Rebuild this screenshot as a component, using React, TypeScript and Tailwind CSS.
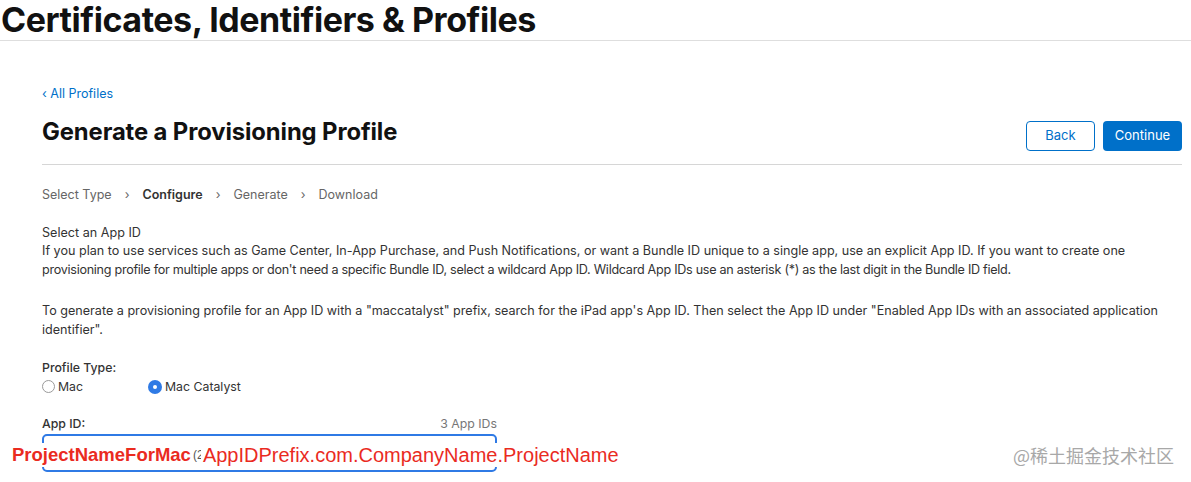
import React from "react";

const sans = { fontFamily: "Inter, 'Noto Sans', sans-serif" };

export default function App() {
  return (
    <div className="relative w-[1191px] h-[482px] bg-white overflow-hidden" style={sans}>
      <header className="h-[41px] border-b border-[#dedede] pl-[1px]">
        <h1 className="text-[34px] leading-[40px] font-bold text-[#111] tracking-[-0.45px]">
          Certificates, Identifiers &amp; Profiles
        </h1>
      </header>

      <main className="ml-[42px] w-[1140px]">
        <a className="block mt-[45px] text-[12.5px] leading-[16px] text-[#0070c9]">‹ All Profiles</a>

        <div className="flex items-end justify-between mt-[16px] pb-[18px] border-b border-[#d6d6d6]">
          <h2 className="text-[23.8px] leading-[28px] font-bold text-[#111] tracking-[-0.1px]">
            Generate a Provisioning Profile
          </h2>
          <div className="flex gap-[8px] mb-[-5px]">
            <button className="w-[69px] h-[30px] rounded-[4px] border border-[#0070c9] text-[#0070c9] text-[13px] bg-white">
              Back
            </button>
            <button className="w-[79px] h-[30px] rounded-[4px] bg-[#0070c9] text-white text-[13px]">
              Continue
            </button>
          </div>
        </div>

        <nav className="flex items-center mt-[22px] text-[12.5px] leading-[16px] text-[#666]">
          <span>Select Type</span>
          <span className="mx-[13px]">›</span>
          <span className="font-semibold text-[#333]">Configure</span>
          <span className="mx-[13px]">›</span>
          <span>Generate</span>
          <span className="mx-[13px]">›</span>
          <span>Download</span>
        </nav>

        <section className="mt-[21px] text-[12.6px] text-[#333]">
          <p className="leading-[17px]">Select an App ID</p>
          <p className="leading-[19px]">
            If you plan to use services such as Game Center, In-App Purchase, and Push Notifications, or want a Bundle ID unique to a single app, use an explicit App ID. If you want to create one
            <br />
            <span className="tracking-[-0.28px]">
              provisioning profile for multiple apps or don't need a specific Bundle ID, select a wildcard App ID. Wildcard App IDs use an asterisk (*) as the last digit in the Bundle ID field.
            </span>
          </p>
          <p className="mt-[22px] leading-[19px]">
            To generate a provisioning profile for an App ID with a "maccatalyst" prefix, search for the iPad app's App ID. Then select the App ID under "Enabled App IDs with an associated application
            <br />
            identifier".
          </p>
        </section>

        <div className="mt-[19px] text-[12.3px] leading-[19px] text-[#333]">
          <div className="font-medium">Profile Type:</div>
          <div className="flex items-center">
            <label className="flex items-center w-[106px]">
              <span className="w-[13px] h-[13px] rounded-full border border-[#9a9a9a] bg-white mr-[3px]" />
              <span>Mac</span>
            </label>
            <label className="flex items-center">
              <span className="w-[14px] h-[14px] rounded-full bg-[#2f7ae5] mr-[3px] flex items-center justify-center">
                <span className="w-[4px] h-[4px] rounded-full bg-white" />
              </span>
              <span>Mac Catalyst</span>
            </label>
          </div>
        </div>

        <div className="mt-[18px] w-[455px] text-[12.3px] leading-[19px]">
          <div className="flex justify-between items-end">
            <span className="font-medium text-[#333]">App ID:</span>
            <span className="text-[#777]">3 App IDs</span>
          </div>
          <div className="h-[38px] rounded-[5px] border-2 border-[#2f7ae5] mt-[1px]" />
        </div>
      </main>

      <div
        className="absolute left-[12px] top-[443px] flex items-center leading-[24px] text-[#ea2b1f]"
        style={{ fontFamily: "'Liberation Sans', Arial, sans-serif" }}
      >
        <span className="text-[18.5px] font-bold bg-white pr-[2px]">ProjectNameForMac</span>
        <span className="text-[12px] text-[#555] w-[8px] overflow-hidden whitespace-nowrap bg-white">(2</span>
        <span className="text-[20px] bg-white pl-[2px]">AppIDPrefix.com.CompanyName.ProjectName</span>
      </div>

      <div
        className="absolute left-[1013px] top-[443px] text-[18px] leading-[24px] text-[#a8a8a8]"
        style={{ fontFamily: "'Noto Sans CJK SC', 'Noto Sans', sans-serif" }}
      >
        @稀土掘金技术社区
      </div>
    </div>
  );
}
